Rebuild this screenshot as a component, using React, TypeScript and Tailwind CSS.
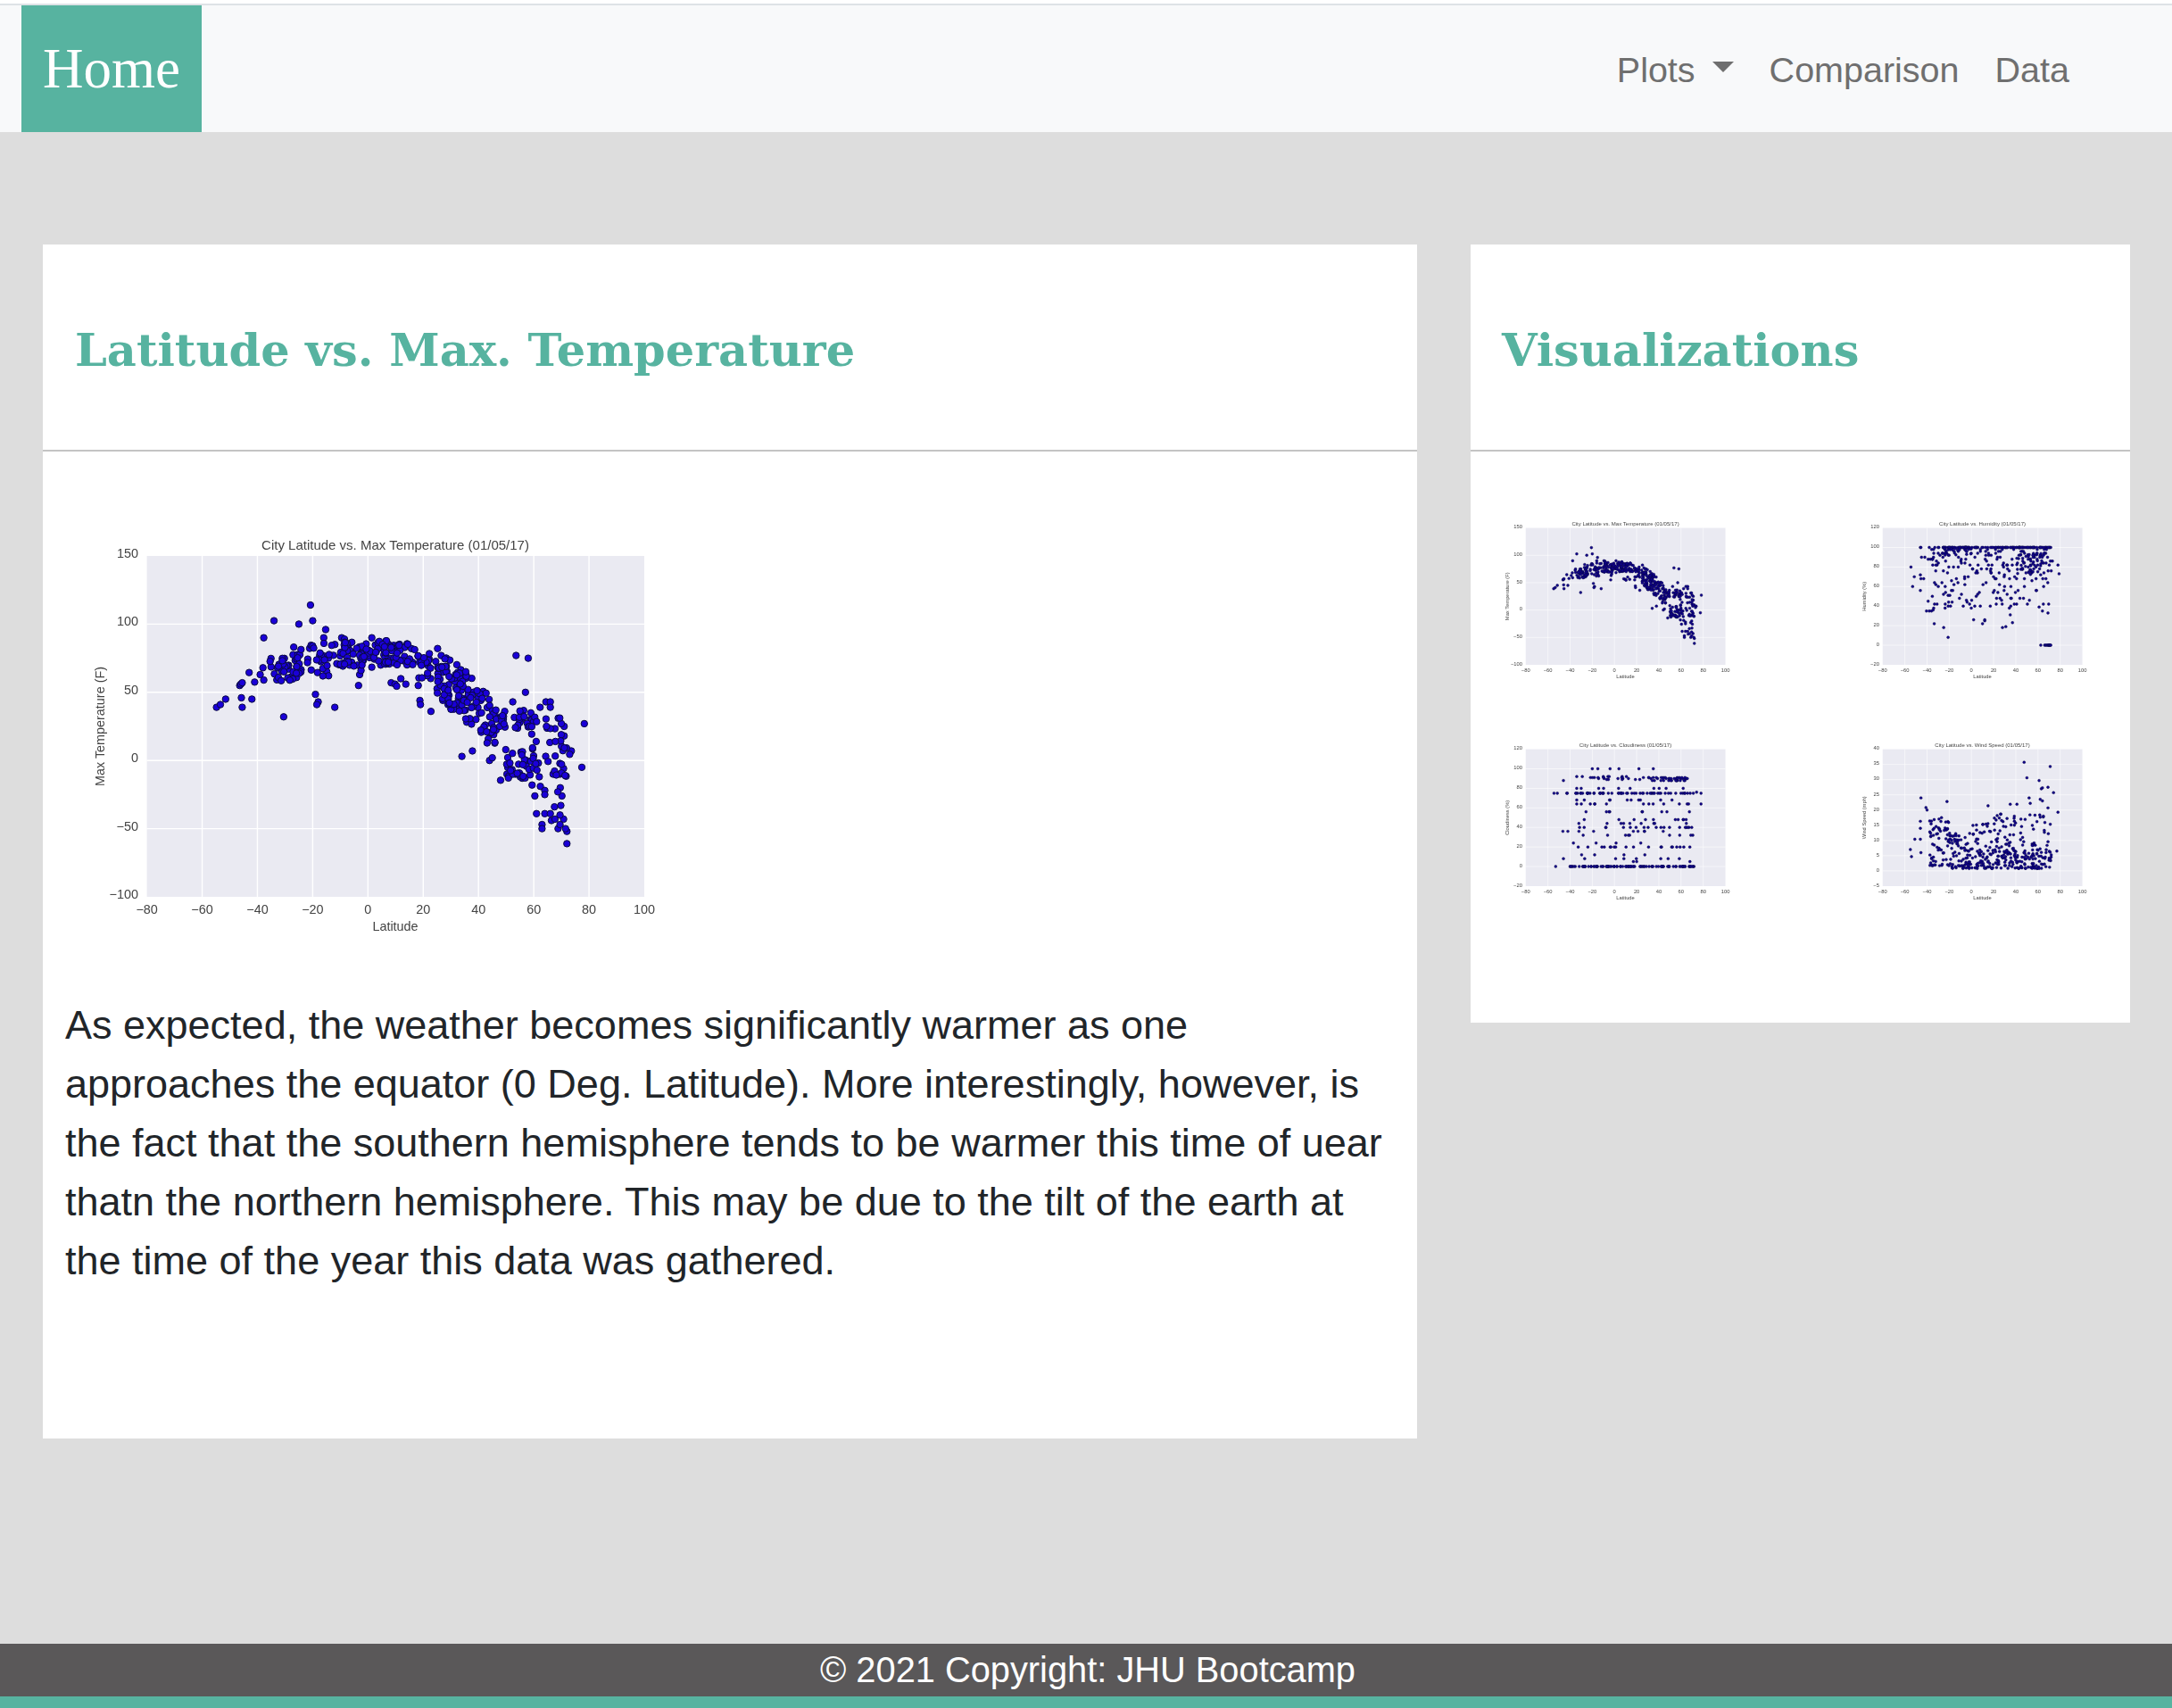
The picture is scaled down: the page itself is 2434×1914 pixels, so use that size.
type Pt = [number, number];

const rng = (seed: number) => () => {
  seed |= 0;
  seed = (seed + 0x6d2b79f5) | 0;
  let t = Math.imul(seed ^ (seed >>> 15), 1 | seed);
  t = (t + Math.imul(t ^ (t >>> 7), 61 | t)) ^ t;
  return ((t ^ (t >>> 14)) >>> 0) / 4294967296;
};

// points read off the picture, the dense bands are filled in below
const tempOutliers: Pt[] = [
  [-54.8, 39], [-53.4, 41], [-51.5, 45], [-45.5, 39], [-45.8, 46], [-42, 45], [-46.4, 55], [-46, 56], [-45.5, 57], [-43, 64.5],
  [-41, 57.5], [-39, 63], [-37.7, 90], [-38, 68], [-37.7, 59], [-34, 102.5], [-30.5, 32], [-25, 100], [-20.8, 114], [-20, 102.5],
  [-15.3, 96], [-16, 90], [-19, 48.5], [-18, 43], [-18.5, 41], [-12, 39], [-3.4, 55], [-3, 63], [-2.5, 66], [1.4, 90],
  [8.4, 57], [9.8, 56], [10.4, 54.5], [11.9, 60], [13.7, 56], [18.2, 55], [18.8, 44], [19, 41], [22.8, 36], [53.6, 77],
  [58, 75], [34, 3], [37.8, 7], [57, 50], [52.4, 43], [64.4, 43], [66, 43], [66, 39], [62.3, 39], [78.3, 27],
  [77.4, -5], [73.6, 7], [73, 4.5], [72, -61], [72, -52], [71.5, -50], [70.8, -43], [69.8, -33], [70.2, -26], [69.6, -20],
  [68.7, -23], [69.5, -10], [67, -10], [67.5, -34], [64, -39], [66, -39], [61, -39], [63, -47], [63, -50], [66.4, -44],
  [67.7, -43], [68.8, -50], [69.5, -40], [69.5, -47], [60.4, -26], [59.4, -18], [62.4, -19], [64, -22], [64, -25], [48, -14.5],
  [50.3, -10], [53.4, -10], [55.8, -13], [44, 0], [45, 2], [71, 25], [70, 27], [71, 18], [-9.5, 90], [-8.5, 89],
];

const makeTemp = (): Pt[] => {
  const r = rng(11);
  const pts: Pt[] = [...tempOutliers];
  const box = (n: number, x0: number, x1: number, y0: number, y1: number) => {
    for (let i = 0; i < n; i++) pts.push([x0 + r() * (x1 - x0), y0 + r() * (y1 - y0)]);
  };
  box(34, -36, -24, 58, 78);
  box(40, -27, -10, 62, 86);
  box(70, -10, 8, 68, 88);
  box(40, 5, 20, 70, 86);
  box(24, 18, 28, 60, 79);
  for (let i = 0; i < 120; i++) {
    const lat = 25 + r() * 22;
    pts.push([lat, 66 - (lat - 25) * 1.9 + (r() - 0.5) * 38]);
  }
  box(38, 44, 60, 22, 37);
  box(32, 49, 60, -13, 9);
  box(36, 59, 72, -12, 32);
  return pts;
};

const makeHumidity = (): Pt[] => {
  const r = rng(23);
  const pts: Pt[] = [
    [-54.5, 80], [-53, 60], [-51.5, 70], [-46, 56], [-46, 72], [-45.5, 68], [-43, 68], [-39, 45], [-40.5, 35], [-38, 35],
    [-36, 35], [-34.5, 36], [-34, 38], [-33.5, 22], [-31, 42], [-25, 18], [-21, 8], [-21, 51], [-19.5, 51], [2, 26],
    [3, 40], [8, 40], [10, 22], [12, 25], [12, 26], [17, 40], [28, 18], [31, 19], [37, 23], [35, 31],
    [61, 39], [64, 35], [69, 33], [78, 82], [79, 73], [73, 86], [-46, 100], [-45.5, 100], [-45, 90], [-42, 90],
    [-39, 88], [-37, 88], [-35, 88], [-38, 100], [-33, 100], [-30, 100],
  ];
  for (const x of [62.5, 66, 67, 68, 69, 69.5, 70, 70.5, 71, 71.5]) pts.push([x, 0]);
  for (let i = 0; i < 120; i++) pts.push([-26 + r() * 98, 100]);
  for (let i = 0; i < 220; i++) {
    const lat = -36 + r() * 108;
    pts.push([lat, Math.round((100 - Math.pow(r(), 1.4) * 62) / 2) * 2]);
  }
  for (let i = 0; i < 45; i++) pts.push([40 + r() * 26, 72 + r() * 22]);
  for (let i = 0; i < 25; i++) pts.push([-25 + r() * 25, 92 + r() * 8]);
  return pts;
};

const makeCloud = (): Pt[] => {
  const r = rng(37);
  const pts: Pt[] = [
    [-54.5, 75], [-51.5, 75], [-53, 0], [-46, 88], [-46, 8], [-46.5, 36], [-42, 36], [-37, 24], [-43, 75], [-42.5, 75],
    [-20, 100], [-15, 100], [-4, 100], [4, 100], [22, 100], [35, 100], [78, 75], [78, 64], [74, 76], [-34, 92], [-29, 92],
    [-34, 64], [-34, 68], [-34, 80], [-30, 80], [68, 5], [17, 5], [20, 5],
  ];
  for (let i = 0; i < 95; i++) pts.push([-41 + r() * 113, 0]);
  for (let i = 0; i < 42; i++) pts.push([30 + r() * 36, 90 + (r() > 0.6 ? -2 : r() > 0.5 ? 1 : 0)]);
  for (let i = 0; i < 22; i++) pts.push([-24 + r() * 52, 90 + Math.round(r() * 3 - 1)]);
  for (let i = 0; i < 55; i++) pts.push([-35 + r() * 107, 75]);
  const rows = [8, 12, 20, 20, 20, 24, 32, 36, 40, 40, 44, 48, 56, 64, 68, 80];
  for (let i = 0; i < 125; i++) {
    const row = rows[Math.floor(r() * rows.length)];
    pts.push([-35 + r() * 107, row]);
  }
  return pts;
};

const makeWind = (): Pt[] => {
  const r = rng(51);
  const pts: Pt[] = [
    [47.5, 35.7], [71, 34.3], [50, 30.6], [61, 29.7], [69, 27.5], [63, 27], [64, 27.3], [74, 25.7], [52, 24], [-45.5, 24],
    [-41, 20.8], [-40, 20], [-22, 22.8], [15, 21.4], [35, 21.9], [41, 21.9], [53, 22.2], [62, 23.5], [64, 23], [69, 20.7],
    [78, 19.3], [77, 6.5], [-55, 7], [-54, 4.7], [-46, 16.3], [-46, 14], [-45.5, 6], [-51, 10.4], [-46, 10.4],
  ];
  for (let i = 0; i < 290; i++) {
    const lat = -18 + r() * 90;
    pts.push([lat, 0.8 + Math.pow(r(), 1.7) * (lat < 0 ? 12 : lat < 20 ? 15 : 18)]);
  }
  for (let i = 0; i < 70; i++) pts.push([-38 + r() * 20, 1.5 + Math.pow(r(), 1.2) * 16]);
  for (let i = 0; i < 55; i++) pts.push([5 + r() * 67, 2 + r() * 5]);
  return pts;
};

type ChartProps = {
  title: string;
  yLabel: string;
  yMin: number;
  yMax: number;
  yStep: number;
  points: Pt[];
  thumb?: boolean;
};

const PX0 = 76.6;
const PX1 = 634;
const PY0 = 36;
const PY1 = 418;

const Chart = ({ title, yLabel, yMin, yMax, yStep, points, thumb }: ChartProps) => {
  const sx = (v: number) => PX0 + ((v + 80) / 180) * (PX1 - PX0);
  const sy = (v: number) => PY1 - ((v - yMin) / (yMax - yMin)) * (PY1 - PY0);
  const xTicks = [-80, -60, -40, -20, 0, 20, 40, 60, 80, 100];
  const yTicks: number[] = [];
  for (let v = yMin; v <= yMax; v += yStep) yTicks.push(v);
  const fmt = (v: number) => (v < 0 ? `\u2212${-v}` : `${v}`);

  return (
    <svg
      viewBox="0 0 660 480"
      className={
        thumb
          ? "block h-[193px] w-[265px] font-['Liberation_Sans',sans-serif] blur-[0.7px]"
          : "block h-[480px] w-[660px] font-['Liberation_Sans',sans-serif] blur-[0.6px]"
      }
    >
      <rect x={PX0} y={PY0} width={PX1 - PX0} height={PY1 - PY0} fill="#eaeaf2" />
      {xTicks.slice(1, -1).map((t) => (
        <line key={t} x1={sx(t)} x2={sx(t)} y1={PY0} y2={PY1} stroke="#fff" strokeWidth={1.4} />
      ))}
      {yTicks.slice(1, -1).map((t) => (
        <line key={t} x1={PX0} x2={PX1} y1={sy(t)} y2={sy(t)} stroke="#fff" strokeWidth={1.4} />
      ))}
      {points.map(([x, y], i) => (
        <circle
          key={i}
          cx={sx(x)}
          cy={sy(y)}
          r={3.7}
          fill={thumb ? "#10008c" : "#1a00d8"}
          stroke={thumb ? "#08083c" : "#0a0a40"}
          strokeWidth={1}
        />
      ))}
      <g fill="#444" fontSize={14.4}>
        <text x={355} y={29} textAnchor="middle" fontSize={15}>
          {title}
        </text>
        {xTicks.map((t) => (
          <text key={t} x={sx(t)} y={437} textAnchor="middle">
            {fmt(t)}
          </text>
        ))}
        {yTicks.map((t) => (
          <text key={t} x={67} y={sy(t) + 2} textAnchor="end">
            {fmt(t)}
          </text>
        ))}
        <text x={355} y={456} textAnchor="middle">
          Latitude
        </text>
        <text transform={`translate(29 227) rotate(-90)`} textAnchor="middle">
          {yLabel}
        </text>
      </g>
    </svg>
  );
};

const temp = makeTemp();
const humidity = makeHumidity();
const cloud = makeCloud();
const wind = makeWind();

const CardHeader = ({ title, className }: { title: string; className: string }) => (
  <div className={`flex h-[232px] items-center border-b-2 border-[#c4c4c4] ${className}`}>
    <h2 className="mt-[7px] font-['DejaVu_Serif',serif] text-[51px] font-bold leading-none text-[#57b3a0]">{title}</h2>
  </div>
);

export default function App() {
  return (
    <div className="flex min-h-[1914px] flex-col bg-[#dddddd] font-['Liberation_Sans',sans-serif]">
      <div className="h-1 bg-white" />
      <nav className="flex h-[144px] items-stretch border-t-2 border-[#dee2e6] bg-[#f8f9fa] pl-6">
        <a className="flex w-[202px] items-center justify-center bg-[#57b3a0] pt-px font-['Liberation_Serif',serif] text-[63px] text-white">
          Home
        </a>
        <div className="ml-auto flex items-center pr-[115px] pt-[3px] text-[39.5px] text-[#6f6f6f]">
          <span>Plots</span>
          <span className="mb-2 ml-[19px] h-0 w-0 border-x-[12px] border-t-[12px] border-x-transparent border-t-[#6f6f6f]" />
          <span className="ml-10">Comparison</span>
          <span className="ml-10">Data</span>
        </div>
      </nav>

      <main className="flex flex-1 items-start gap-[60px] pl-12 pt-[126px]">
        <section className="w-[1540px] bg-white">
          <CardHeader title="Latitude vs. Max. Temperature" className="pl-[36px]" />
          <div className="pb-[166px] pt-[81px]">
            <div className="ml-10">
              <Chart
                title="City Latitude vs. Max Temperature (01/05/17)"
                yLabel="Max Temperature (F)"
                yMin={-100}
                yMax={150}
                yStep={50}
                points={temp}
              />
            </div>
            <p className="ml-[25px] mt-[49px] w-[1510px] text-[45px] leading-[66px] text-[#212529]">
              As expected, the weather becomes significantly warmer as one
              <br />
              approaches the equator (0 Deg. Latitude). More interestingly, however, is
              <br />
              the fact that the southern hemisphere tends to be warmer this time of uear
              <br />
              thatn the northern hemisphere. This may be due to the tilt of the earth at
              <br />
              the time of the year this data was gathered.
            </p>
          </div>
        </section>

        <section className="w-[739px] bg-white">
          <CardHeader title="Visualizations" className="pl-[35px]" />
          <div className="grid grid-cols-[400px_265px] grid-rows-[248px_248px] pb-[73px] pl-[31px] pt-[71px]">
            <Chart thumb title="City Latitude vs. Max Temperature (01/05/17)" yLabel="Max Temperature (F)" yMin={-100} yMax={150} yStep={50} points={temp} />
            <Chart thumb title="City Latitude vs. Humidity (01/05/17)" yLabel="Humidity (%)" yMin={-20} yMax={120} yStep={20} points={humidity} />
            <Chart thumb title="City Latitude vs. Cloudiness (01/05/17)" yLabel="Cloudiness (%)" yMin={-20} yMax={120} yStep={20} points={cloud} />
            <Chart thumb title="City Latitude vs. Wind Speed (01/05/17)" yLabel="Wind Speed (mph)" yMin={-5} yMax={40} yStep={5} points={wind} />
          </div>
        </section>
      </main>

      <footer className="flex h-[59px] items-center justify-center bg-[#5a5859] pl-1 text-[39.8px] text-white">
        © 2021 Copyright: JHU Bootcamp
      </footer>
      <div className="h-[13px] bg-[#57b3a0]" />
    </div>
  );
}
